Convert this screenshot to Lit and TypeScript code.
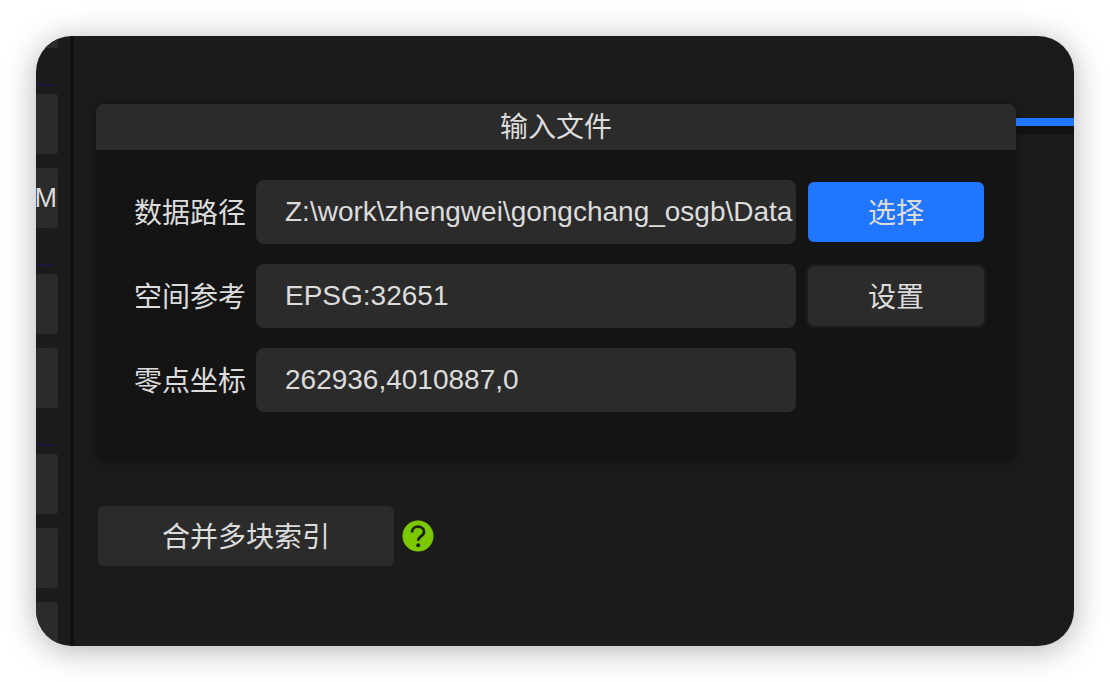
import { LitElement, css, html } from 'lit'
import { customElement } from 'lit/decorators.js'

const FIELDS = [
  { label: '数据路径', value: 'Z:\\work\\zhengwei\\gongchang_osgb\\Data', action: '选择', primary: true },
  { label: '空间参考', value: 'EPSG:32651', action: '设置', primary: false },
  { label: '零点坐标', value: '262936,4010887,0', action: '', primary: false },
]

@customElement('app-root')
export class AppRoot extends LitElement {
  static styles = css`
    :host {
      display: block;
      width: 1110px;
      height: 682px;
      padding: 36px;
      box-sizing: border-box;
      background: #fff;
      font-family: 'Liberation Sans', 'Noto Sans CJK SC', sans-serif;
      font-size: 28px;
      color: #dcdcdc;
    }
    .window {
      display: flex;
      height: 610px;
      overflow: hidden;
      border-radius: 36px;
      background: #1b1b1b;
      box-shadow: 0 4px 32px rgba(0, 0, 0, 0.3);
    }
    .sidebar {
      flex: none;
      width: 34px;
      display: flex;
      flex-direction: column;
      overflow: hidden;
      border-right: 4px solid #111;
    }
    .stub {
      flex: none;
      width: 22px;
      height: 12px;
      background: #2b2b2b;
      border-radius: 0 0 3px 0;
    }
    .group {
      flex: none;
      margin-top: 36px;
      display: flex;
      flex-direction: column;
    }
    .line {
      width: 18px;
      height: 2px;
      margin-bottom: 8px;
      background: #1a1a3e;
    }
    .item {
      flex: none;
      width: 22px;
      height: 60px;
      margin-bottom: 14px;
      display: flex;
      align-items: center;
      justify-content: flex-end;
      overflow: hidden;
      background: #2b2b2b;
      border-radius: 0 3px 3px 0;
      white-space: nowrap;
      line-height: 1;
    }
    .item:last-child {
      margin-bottom: 0;
    }
    .item span {
      padding-right: 1px;
      font-size: 27px;
    }
    .main {
      flex: 1;
      min-width: 0;
      padding: 68px 0 0 22px;
    }
    .section {
      display: flex;
      align-items: flex-start;
    }
    .panel {
      flex: none;
      width: 920px;
      height: 358px;
      background: #141414;
      border-radius: 8px;
      box-shadow: 0 0 12px rgba(0, 0, 0, 0.3);
    }
    .panel-title {
      height: 46px;
      line-height: 47px;
      text-align: center;
      background: #2b2b2b;
      border-radius: 8px 8px 0 0;
    }
    .rail {
      flex: 1;
      height: 8px;
      margin-top: 14px;
      background: #2176ff;
      border-bottom: 8px solid #111;
    }
    .fields {
      display: flex;
      flex-direction: column;
      gap: 20px;
      padding-top: 30px;
    }
    .field {
      display: flex;
      align-items: center;
      height: 64px;
    }
    .field label {
      flex: none;
      width: 150px;
      padding-bottom: 3px;
      text-align: right;
      white-space: nowrap;
    }
    .field input {
      flex: none;
      width: 540px;
      height: 64px;
      margin-left: 10px;
      padding: 0 0 0 29px;
      box-sizing: border-box;
      border: 0;
      outline: 0;
      border-radius: 8px;
      background: #2b2b2b;
      color: inherit;
      font: inherit;
    }
    button {
      height: 60px;
      border: 0;
      padding: 0 0 3px;
      border-radius: 6px;
      background: #2b2b2b;
      color: inherit;
      font: inherit;
    }
    .field button {
      flex: none;
      width: 176px;
      margin-left: 12px;
    }
    .field button.primary {
      background: #2176ff;
    }
    .field button.plain {
      box-shadow: 0 0 0 2px #1c1c1c;
    }
    .merge {
      display: flex;
      align-items: center;
      gap: 8px;
      margin: 44px 0 0 2px;
    }
    .merge button {
      width: 296px;
    }
    .help {
      display: block;
      width: 32px;
      height: 32px;
    }
  `

  render() {
    return html`
      <div class="window">
        <aside class="sidebar">
          <div class="stub"></div>
          <div class="group">
            <div class="line"></div>
            <div class="item"></div>
            <div class="item"><span>M</span></div>
          </div>
          <div class="group">
            <div class="line"></div>
            <div class="item"></div>
            <div class="item"></div>
          </div>
          <div class="group">
            <div class="line"></div>
            <div class="item"></div>
            <div class="item"></div>
            <div class="item"></div>
          </div>
        </aside>
        <main class="main">
          <div class="section">
            <section class="panel">
              <div class="panel-title">输入文件</div>
              <div class="fields">
                ${FIELDS.map(
                  (f) => html`
                    <div class="field">
                      <label>${f.label}</label>
                      <input readonly .value=${f.value} />
                      ${f.action
                        ? html`<button class=${f.primary ? 'primary' : 'plain'}>${f.action}</button>`
                        : ''}
                    </div>
                  `,
                )}
              </div>
            </section>
            <div class="rail"></div>
          </div>
          <div class="merge">
            <button>合并多块索引</button>
            <svg class="help" viewBox="0 0 32 32" aria-hidden="true">
              <circle cx="16" cy="16" r="15.5" fill="#7cc800" />
              <path
                d="M10 12.4c0-3.500 2.600-5.800 6-5.800s6 2.100 6 5.100c0 2.300-1.300 3.500-3.100 4.700-1.700 1.200-2.700 2.200-2.700 4.400"
                fill="none"
                stroke="#1b2410"
                stroke-width="2.800"
              />
              <circle cx="16.200" cy="25.200" r="2" fill="#1b2410" />
            </svg>
          </div>
        </main>
      </div>
    `
  }
}

declare global {
  interface HTMLElementTagNameMap {
    'app-root': AppRoot
  }
}
